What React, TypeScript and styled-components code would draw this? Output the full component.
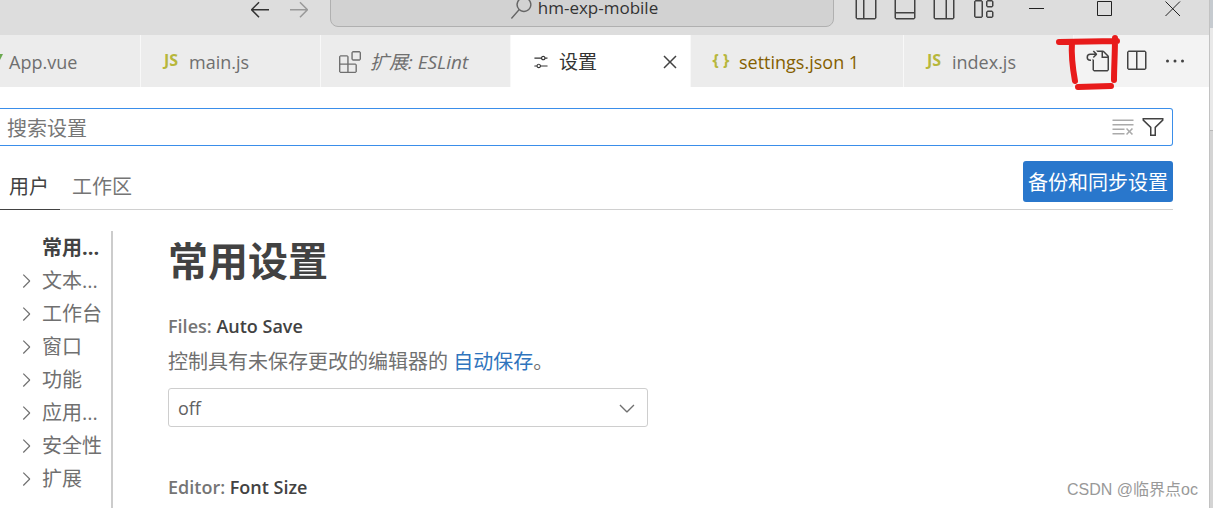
import React from "react";
import styled, { createGlobalStyle } from "styled-components";
import {
  VscArrowLeft,
  VscArrowRight,
  VscChevronDown,
  VscChevronRight,
  VscClearAll,
  VscClose,
  VscEllipsis,
  VscExtensions,
  VscFilter,
  VscGoToFile,
  VscLayout,
  VscLayoutPanelOff,
  VscLayoutSidebarLeftOff,
  VscLayoutSidebarRightOff,
  VscSearch,
  VscSettings,
  VscSplitHorizontal,
} from "react-icons/vsc";

const GlobalStyle = createGlobalStyle`
  *, *::before, *::after { box-sizing: border-box; }
  body {
    margin: 0;
    overflow: hidden;
    background: #fff;
    color: #707070;
    font-family: "Open Sans", "Noto Sans CJK SC", sans-serif;
    font-size: 18px;
    line-height: 24px;
  }
  button, input, select { font: inherit; color: inherit; }
  svg { display: block; flex: none; }
`;

const Desktop = styled.div`
  position: relative;
  display: flex;
  height: 100vh;
  overflow: hidden;
`;

const Window = styled.div`
  flex: 1;
  min-width: 0;
  display: flex;
  flex-direction: column;
  background: #fff;
`;

const Backdrop = styled.div`
  width: 4px;
  display: flex;
  flex-direction: column;
  border-left: 1px solid #c2c2c2;
  background: #d4d4d4;
`;

const BackdropBand = styled.div<{ $height: number; $color: string }>`
  height: ${(p) => p.$height}px;
  background: ${(p) => p.$color};
`;

const TitleBar = styled.header`
  flex: none;
  display: flex;
  align-items: center;
  height: 52px;
  margin-top: -17px;
  background: #ddd;
`;

const IconButton = styled.button<{ $color?: string }>`
  display: grid;
  place-items: center;
  flex: none;
  padding: 0;
  border: 0;
  background: none;
  color: ${(p) => p.$color || "#424242"};
`;

const History = styled.nav`
  width: 330px;
  display: flex;
  justify-content: flex-end;
  gap: 15px;
  padding-right: 19px;
`;

const CommandCenter = styled.button`
  flex: 1;
  height: 36px;
  display: flex;
  align-items: center;
  justify-content: center;
  gap: 6px;
  border: 1px solid #b0b0b0;
  border-radius: 8px;
  background: #d2d2d2;
  color: #333;
  padding: 0 0 2px 4px;
  font-size: 17px;
  line-height: 16px;
`;

const TitleActions = styled.div`
  width: 375px;
  display: flex;
  align-items: center;
  padding-left: 20px;
`;

const LayoutButtons = styled.div`
  display: flex;
  gap: 15px;
`;

const WindowButtons = styled.div`
  flex: 1;
  display: flex;
  justify-content: space-between;
  padding: 0 28px 0 34px;
`;

const TabBar = styled.div`
  flex: none;
  display: flex;
  height: 52px;
  background: #f3f3f3;
`;

const Tab = styled.div<{ $width: number; $active?: boolean; $color?: string; $italic?: boolean; $pad?: number; $size?: number }>`
  width: ${(p) => p.$width}px;
  display: flex;
  align-items: center;
  gap: 9px;
  padding: 2px 8px 0 ${(p) => (p.$pad === undefined ? 21 : p.$pad)}px;
  border-right: 1px solid #f8f8f8;
  background: ${(p) => (p.$active ? "#fff" : "#ececec")};
  color: ${(p) => p.$color || "#6f6f6f"};
  font-size: ${(p) => p.$size || 18}px;
  font-style: ${(p) => (p.$italic ? "italic" : "normal")};
  white-space: nowrap;
  overflow: hidden;
`;

const TabLabel = styled.span`
  flex: 1;
`;

const FileBadge = styled.span`
  width: 18px;
  text-align: center;
  font-size: 16px;
  font-weight: 700;
  line-height: 20px;
  padding-bottom: 4px;
  color: #b7b73b;
`;

const TabActions = styled.div`
  flex: 1;
  display: flex;
  align-items: center;
  justify-content: flex-end;
  gap: 15px;
  padding-right: 22px;
`;

const Settings = styled.main`
  flex: 1;
  min-height: 0;
  display: flex;
  flex-direction: column;
  padding: 21px 36px 0 0;
`;

const SearchBox = styled.div`
  flex: none;
  height: 38px;
  display: flex;
  align-items: center;
  gap: 6px;
  padding-right: 7px;
  border: 1px solid #3a8eea;
  border-left: 0;
  border-radius: 0 3px 3px 0;
`;

const SearchInput = styled.input`
  flex: 1;
  min-width: 0;
  height: 100%;
  padding: 2px 7px 0;
  border: 0;
  outline: 0;
  background: none;
  font-size: 20px;
  &::placeholder { color: #767676; opacity: 1; }
`;

const ScopeBar = styled.div`
  flex: none;
  height: 64px;
  display: flex;
  align-items: flex-end;
  justify-content: space-between;
  border-bottom: 1px solid #d0d0d0;
`;

const Scopes = styled.div`
  display: flex;
  gap: 3px;
`;

const Scope = styled.button<{ $active?: boolean }>`
  height: 49px;
  margin-bottom: -1px;
  padding: 4px 11px 0 9px;
  border: 0;
  border-bottom: 1px solid ${(p) => (p.$active ? "#424242" : "transparent")};
  background: none;
  color: ${(p) => (p.$active ? "#424242" : "#757575")};
  font-size: 20px;
`;

const SyncButton = styled.button`
  height: 41px;
  margin-bottom: 7px;
  padding: 2px 5px 0;
  border: 0;
  border-radius: 3px;
  background: #2977cc;
  color: #fff;
  font-size: 20px;
`;

const Body = styled.div`
  flex: 1;
  min-height: 0;
  display: flex;
  padding-top: 21px;
`;

const Toc = styled.ul`
  width: 113px;
  flex: none;
  margin: 0;
  padding: 0 0 0 15px;
  border-right: 2px solid #ccc;
  list-style: none;
`;

const TocItem = styled.li<{ $active?: boolean }>`
  height: 33px;
  display: grid;
  grid-template-columns: 22px 1fr;
  column-gap: 5px;
  align-items: center;
  font-size: 20px;
  white-space: nowrap;
  color: ${(p) => (p.$active ? "#424242" : "#707070")};
  font-weight: ${(p) => (p.$active ? 700 : 400)};
`;

const Content = styled.section`
  flex: 1;
  padding-left: 55px;
`;

const Heading = styled.h1`
  margin: 0 0 34px;
  font-size: 40px;
  line-height: 48px;
  padding-top: 6px;
  color: #424242;
  font-weight: 700;
`;

const Setting = styled.div`
  height: 161px;
  line-height: 30px;
  margin-top: -8px;
  & + & { margin-top: 0; }
`;

const SettingTitle = styled.label`
  display: block;
  font-weight: 600;
  color: #757575;
  & > strong { font-weight: 600; color: #424242; }
`;

const Description = styled.p`
  margin: 6px 0 11px;
  font-size: 20px;
  & > a { color: #2f74bd; text-decoration: none; }
`;

const SelectField = styled.div`
  width: 480px;
  display: grid;
  align-items: center;
  & > * { grid-area: 1 / 1; }
  & > svg { justify-self: end; margin-right: 9px; pointer-events: none; }
`;

const Select = styled.select`
  appearance: none;
  width: 100%;
  height: 39px;
  padding: 0 36px 0 9px;
  border: 1px solid #cecece;
  border-radius: 3px;
  background: #fff;
  color: #616161;
`;

const Marker = styled.svg`
  position: absolute;
  top: 34px;
  right: 92px;
  pointer-events: none;
`;

const Watermark = styled.div`
  position: absolute;
  right: 15px;
  bottom: 6px;
  font-family: "Liberation Sans", "Noto Sans CJK SC", sans-serif;
  font-size: 16px;
  color: #999;
`;

const WindowGlyph = ({ path }: { path: string }) => (
  <svg width="16" height="16" viewBox="0 0 16 16" fill="none" stroke="currentColor">
    <path d={path} />
  </svg>
);

const categories = ["文本...", "工作台", "窗口", "功能", "应用...", "安全性", "扩展"];

export default function App() {
  return (
    <Desktop>
      <GlobalStyle />
      <Window>
        <TitleBar>
          <History>
            <IconButton aria-label="Back" $color="#333"><VscArrowLeft size={24} /></IconButton>
            <IconButton aria-label="Forward" $color="#999"><VscArrowRight size={24} /></IconButton>
          </History>
          <CommandCenter>
            <VscSearch size={22} color="#666" />
            hm-exp-mobile
          </CommandCenter>
          <TitleActions>
            <LayoutButtons>
              <IconButton aria-label="Primary side bar"><VscLayoutSidebarLeftOff size={24} /></IconButton>
              <IconButton aria-label="Panel"><VscLayoutPanelOff size={24} /></IconButton>
              <IconButton aria-label="Secondary side bar"><VscLayoutSidebarRightOff size={24} /></IconButton>
              <IconButton aria-label="Customize layout"><VscLayout size={24} /></IconButton>
            </LayoutButtons>
            <WindowButtons>
              <IconButton aria-label="Minimize" $color="#222"><WindowGlyph path="M0 7.5H15" /></IconButton>
              <IconButton aria-label="Maximize" $color="#222"><WindowGlyph path="M.5 .5H14.5V14.5H.5Z" /></IconButton>
              <IconButton aria-label="Close window" $color="#222"><WindowGlyph path="M.5 .5L15 15M15 .5L.5 15" /></IconButton>
            </WindowButtons>
          </TitleActions>
        </TitleBar>

        <TabBar>
          <Tab $width={141} $pad={0}>
            <svg width="3" height="24" viewBox="0 0 3 24" style={{ marginRight: -3 }}>
              <path d="M0 4H3L0 10Z" fill="#6aa84f" />
            </svg>
            <TabLabel>App.vue</TabLabel>
          </Tab>
          <Tab $width={180}>
            <FileBadge>JS</FileBadge>
            <TabLabel>main.js</TabLabel>
          </Tab>
          <Tab $width={190} $italic $pad={18} $size={19}>
            <VscExtensions size={22} />
            <TabLabel>扩展: ESLint</TabLabel>
          </Tab>
          <Tab $width={180} $active $color="#333" $size={19}>
            <VscSettings size={18} />
            <TabLabel>设置</TabLabel>
            <IconButton aria-label="Close tab"><VscClose size={24} /></IconButton>
          </Tab>
          <Tab $width={213} $color="#855f00">
            <FileBadge>{"{ }"}</FileBadge>
            <TabLabel>settings.json 1</TabLabel>
          </Tab>
          <Tab $width={170}>
            <FileBadge>JS</FileBadge>
            <TabLabel>index.js</TabLabel>
          </Tab>
          <TabActions>
            <IconButton aria-label="Open settings file"><VscGoToFile size={24} /></IconButton>
            <IconButton aria-label="Split editor"><VscSplitHorizontal size={24} /></IconButton>
            <IconButton aria-label="More actions"><VscEllipsis size={24} /></IconButton>
          </TabActions>
        </TabBar>

        <Settings>
          <SearchBox>
            <SearchInput type="text" aria-label="搜索设置" placeholder="搜索设置" />
            <IconButton aria-label="Clear search" $color="#aaa"><VscClearAll size={24} /></IconButton>
            <IconButton aria-label="Filter"><VscFilter size={24} /></IconButton>
          </SearchBox>
          <ScopeBar>
            <Scopes>
              <Scope $active>用户</Scope>
              <Scope>工作区</Scope>
            </Scopes>
            <SyncButton>备份和同步设置</SyncButton>
          </ScopeBar>
          <Body>
            <Toc>
              <TocItem $active><span />常用...</TocItem>
              {categories.map((name) => (
                <TocItem key={name}><VscChevronRight size={22} />{name}</TocItem>
              ))}
            </Toc>
            <Content>
              <Heading>常用设置</Heading>
              <Setting>
                <SettingTitle htmlFor="auto-save">Files: <strong>Auto Save</strong></SettingTitle>
                <Description>控制具有未保存更改的编辑器的 <a href="#auto-save">自动保存</a>。</Description>
                <SelectField>
                  <Select id="auto-save" defaultValue="off">
                    <option>off</option>
                  </Select>
                  <VscChevronDown size={24} />
                </SelectField>
              </Setting>
              <Setting>
                <SettingTitle as="div">Editor: <strong>Font Size</strong></SettingTitle>
              </Setting>
            </Content>
          </Body>
        </Settings>
      </Window>
      <Backdrop>
        <BackdropBand $height={28} $color="#c6cbd0" />
        <BackdropBand $height={102} $color="#e9e9e9" />
        <BackdropBand $height={1} $color="#b8b8b8" />
      </Backdrop>
      <Marker width="66" height="58" viewBox="0 0 66 58" fill="none" stroke="#e81b1b" strokeWidth="6" strokeLinecap="round" strokeLinejoin="round">
        <path d="M4 8L62 7M17 8C16 22 18 36 20 47M60 4C60 20 59 34 59 46M23 53L56 52" />
      </Marker>
      <Watermark>CSDN @临界点oc</Watermark>
    </Desktop>
  );
}
